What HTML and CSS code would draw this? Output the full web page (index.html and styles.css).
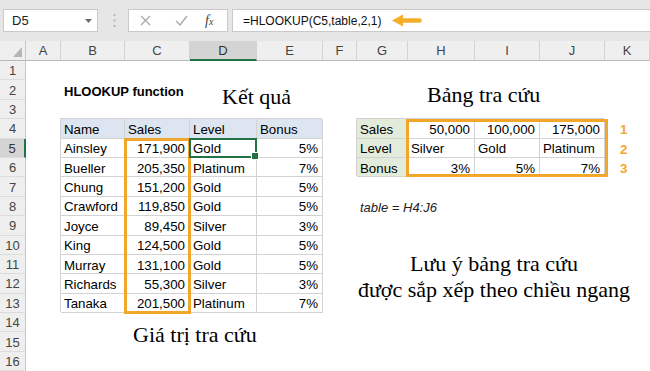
FILE: index.html
```html
<!DOCTYPE html>
<html>
<head>
<meta charset="utf-8">
<link rel="stylesheet" href="styles.css">
</head>
<body>
<div class="topbar">
  <div class="namebox"><span>D5</span><svg class="dd" width="7" height="4" viewBox="0 0 7 4"><path d="M0 0h7L3.5 4z" fill="#6d6d6d"/></svg></div>
  <div class="grip"><svg width="3" height="13" viewBox="0 0 3 13"><rect x="0.5" y="0" width="2" height="2" fill="#b8b8b8"/><rect x="0.5" y="5.5" width="2" height="2" fill="#b8b8b8"/><rect x="0.5" y="11" width="2" height="2" fill="#b8b8b8"/></svg></div>
  <div class="fxbox">
    <svg class="ic" width="11" height="11" viewBox="0 0 11 11"><path d="M1 1l9 9M10 1l-9 9" stroke="#a9a9a9" stroke-width="1.3"/></svg>
    <svg class="ic" width="13" height="11" viewBox="0 0 13 11"><path d="M1 6l4 4 7-9" stroke="#a9a9a9" stroke-width="1.4" fill="none"/></svg>
    <span class="fx">f<small>x</small></span>
  </div>
  <div class="formula"><span>=HLOOKUP(C5,table,2,1)</span><svg class="arrow" width="30" height="13" viewBox="0 0 30 13"><path d="M0 6.5L11 0.5V4.2H27.5a2.3 2.3 0 0 1 0 4.6H11V12.5Z" fill="#f4ae2a"/></svg></div>
</div>
<div class="sheet">
  <div class="corner"><svg width="9" height="10" viewBox="0 0 9 10"><path d="M9 0V10H0Z" fill="#b5b5b5"/></svg></div>
  <div class="colhdr">
    <div class="ch">A</div><div class="ch">B</div><div class="ch">C</div><div class="ch on">D</div><div class="ch">E</div><div class="ch">F</div><div class="ch">G</div><div class="ch">H</div><div class="ch">I</div><div class="ch">J</div><div class="ch">K</div>
  </div>
  <div class="rowhdr">
    <div class="rh">1</div><div class="rh">2</div><div class="rh">3</div><div class="rh">4</div><div class="rh on">5</div><div class="rh">6</div><div class="rh">7</div><div class="rh">8</div><div class="rh">9</div><div class="rh">10</div><div class="rh">11</div><div class="rh">12</div><div class="rh">13</div><div class="rh">14</div><div class="rh">15</div><div class="rh">16</div>
  </div>
  <div class="cells">
    <div class="title">HLOOKUP function</div>
    <div class="tbl">
      <div class="c h">Name</div><div class="c h">Sales</div><div class="c h">Level</div><div class="c h">Bonus</div>
      <div class="c">Ainsley</div><div class="c r">171,900</div><div class="c">Gold</div><div class="c r">5%</div>
      <div class="c">Bueller</div><div class="c r">205,350</div><div class="c">Platinum</div><div class="c r">7%</div>
      <div class="c">Chung</div><div class="c r">151,200</div><div class="c">Gold</div><div class="c r">5%</div>
      <div class="c">Crawford</div><div class="c r">119,850</div><div class="c">Gold</div><div class="c r">5%</div>
      <div class="c">Joyce</div><div class="c r">89,450</div><div class="c">Silver</div><div class="c r">3%</div>
      <div class="c">King</div><div class="c r">124,500</div><div class="c">Gold</div><div class="c r">5%</div>
      <div class="c">Murray</div><div class="c r">131,100</div><div class="c">Gold</div><div class="c r">5%</div>
      <div class="c">Richards</div><div class="c r">55,300</div><div class="c">Silver</div><div class="c r">3%</div>
      <div class="c">Tanaka</div><div class="c r">201,500</div><div class="c">Platinum</div><div class="c r">7%</div>
    </div>
    <div class="lk">
      <div class="c g">Sales</div><div class="c r">50,000</div><div class="c r">100,000</div><div class="c r">175,000</div>
      <div class="c g">Level</div><div class="c">Silver</div><div class="c">Gold</div><div class="c">Platinum</div>
      <div class="c g">Bonus</div><div class="c r">3%</div><div class="c r">5%</div><div class="c r">7%</div>
    </div>
    <div class="hl1"></div>
    <div class="hl2"></div>
    <div class="sel"></div>
    <div class="nums"><div>1</div><div>2</div><div>3</div></div>
    <div class="note">table = H4:J6</div>
    <div class="ann ann1">Kết quả</div>
    <div class="ann ann2">Bảng tra cứu</div>
    <div class="ann ann3">Giá trị tra cứu</div>
    <div class="ann ann4">Lưu ý bảng tra cứu<br>được sắp xếp theo chiều ngang</div>
  </div>
</div>
</body>
</html>
```
FILE: styles.css
```css
* { box-sizing: border-box; }
html, body { margin: 0; padding: 0; }
body {
  width: 650px; height: 371px; overflow: hidden; background: #fff;
  font-family: "Liberation Sans", Arial, sans-serif; color: #000;
}
.topbar {
  height: 41px; background: #e6e6e6; display: flex; align-items: flex-start;
  padding-top: 9px; padding-left: 3px;
}
.namebox {
  width: 95px; height: 23px; background: #fff; border: 1px solid #c9c9c9;
  display: flex; align-items: center; justify-content: space-between;
  padding: 0 5px 0 8px; font-size: 13px; color: #222;
}
.grip { width: 30px; height: 23px; display: flex; align-items: center; justify-content: center; padding-left: 2px; }
.fxbox {
  width: 100px; height: 23px; background: #fff; border: 1px solid #c9c9c9;
  display: flex; align-items: center; padding-left: 11px; gap: 0;
}
.fxbox .ic:first-child { margin-right: 24px; }
.fxbox .ic:nth-child(2) { margin-right: 17px; }
.fx { font-family: "Liberation Serif", serif; font-style: italic; font-size: 14px; color: #444; }
.fx small { font-size: 10px; }
.formula {
  flex: 1; height: 23px; margin-left: 4px; background: #fff; border: 1px solid #c9c9c9; border-right: 0;
  display: flex; align-items: center; padding-left: 10px; font-size: 12px; color: #111;
}
.arrow { margin-left: 11px; }
.sheet {
  display: grid; grid-template-columns: 26px 1fr; grid-template-rows: 20px 1fr; height: 330px;
}
.corner {
  background: #efefef; border-right: 1px solid #c6c6c6; border-bottom: 1px solid #b9b9b9;
  display: flex; align-items: flex-end; justify-content: flex-end; padding: 0 3px 3px 0;
}
.colhdr, .cells {
  display: grid;
  grid-template-columns: 35px 64px 65px 67px 66px 34px 51px 67px 65px 65px 1fr;
}
.ch {
  background: #efefef; border-right: 1px solid #d2d2d2; border-bottom: 1px solid #b9b9b9;
  display: flex; align-items: center; justify-content: center; font-size: 13px; color: #444;
}
.ch.on { background: #d4d4d4; border-bottom: 2px solid #217346; color: #333; }
.rowhdr { display: flex; flex-direction: column; }
.rh {
  height: 19.4px; flex: none; background: #efefef; border-right: 1px solid #c6c6c6; border-bottom: 1px solid #dcdcdc;
  display: flex; align-items: center; justify-content: center; font-size: 13px; color: #444; padding-top: 1px;
}
.rh.on { background: #d4d4d4; border-right: 2px solid #217346; color: #333; }
.cells { grid-template-rows: repeat(16, 19.4px); }
.title {
  grid-column: 2 / 4; grid-row: 2; font-weight: bold; font-size: 13px;
  display: flex; align-items: center; padding: 2px 0 0 3px;
}
.tbl, .lk {
  display: grid; grid-template-columns: subgrid; grid-template-rows: subgrid;
  box-shadow: -1px -1px 0 0 #d2d2d2;
}
.tbl { grid-column: 2 / 6; grid-row: 4 / 14; }
.lk { grid-column: 7 / 11; grid-row: 4 / 7; }
.c {
  border-right: 1px solid #d2d2d2; border-bottom: 1px solid #d2d2d2;
  display: flex; align-items: center; padding: 2px 4px 0 3px; font-size: 13.3px; white-space: nowrap;
}
.c.h { background: #dce5f0; }
.c.g { background: #e3ecdb; }
.c.r { justify-content: flex-end; }
.hl1 { grid-column: 3; grid-row: 5 / 14; border: 3px solid #f3a62c; margin: -1px -1px -1px -1px; }
.hl2 { grid-column: 8 / 11; grid-row: 4 / 7; border: 3px solid #f3a62c; margin: 0 -3px 0 -2px; }
.sel { grid-column: 4; grid-row: 5; border: 2px solid #217346; margin: -1px 0 0 -1px; position: relative; }
.sel::after {
  content: ""; position: absolute; right: -4px; bottom: -4px; width: 6px; height: 6px;
  background: #217346; border: 1px solid #fff;
}
.nums {
  grid-column: 11; grid-row: 4 / 7; display: grid; grid-template-rows: subgrid;
  color: #f3a62c; font-weight: bold; font-size: 13.3px;
}
.nums div { display: flex; align-items: center; padding: 2px 0 0 15px; }
.note {
  grid-column: 7 / 11; grid-row: 8; font-style: italic; font-size: 13px; color: #222;
  display: flex; align-items: center; padding: 3px 0 0 3px;
}
.ann { font-family: "Liberation Serif", "Times New Roman", serif; font-size: 22px; line-height: 25px; color: #000; white-space: nowrap; align-self: start; }
.ann1 { grid-column: 4 / 6; grid-row: 2 / 4; padding-left: 32px; margin-top: 3.6px; }
.ann2 { grid-column: 8 / 11; grid-row: 2 / 4; padding-left: 19px; margin-top: 1.7px; }
.ann3 { grid-column: 3 / 6; grid-row: 14 / 17; padding-left: 8px; margin-top: 9px; }
.ann4 { grid-column: 7 / 12; grid-row: 10 / 15; text-align: center; line-height: 26px; padding-right: 19px; margin-top: 15px; }
```
